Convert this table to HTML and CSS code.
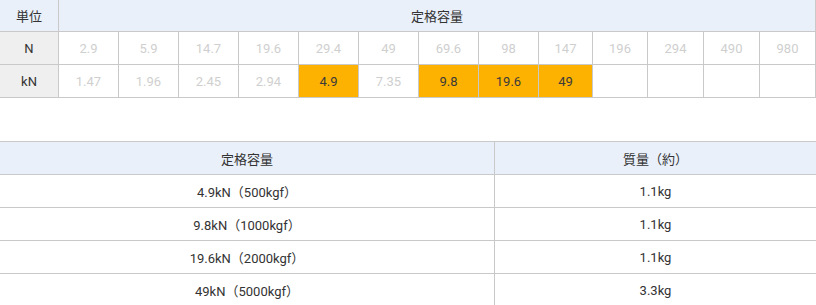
FILE: index.html
```html
<!DOCTYPE html>
<html lang="ja">
<head>
<meta charset="utf-8">
<link rel="stylesheet" href="styles.css">
</head>
<body>
<table class="spec">
  <colgroup>
    <col class="c-unit"><col class="c60"><col class="c60"><col class="c60"><col class="c60"><col class="c60"><col class="c60"><col class="c60"><col class="c60"><col class="c54"><col class="c55"><col class="c56"><col class="c56"><col class="c56">
  </colgroup>
  <tr class="head">
    <th class="unit">単位</th>
    <th colspan="13">定格容量</th>
  </tr>
  <tr>
    <td class="unit">N</td>
    <td class="dim">2.9</td><td class="dim">5.9</td><td class="dim">14.7</td><td class="dim">19.6</td><td class="dim">29.4</td><td class="dim">49</td><td class="dim">69.6</td><td class="dim">98</td><td class="dim">147</td><td class="dim">196</td><td class="dim">294</td><td class="dim">490</td><td class="dim">980</td>
  </tr>
  <tr>
    <td class="unit">kN</td>
    <td class="dim">1.47</td><td class="dim">1.96</td><td class="dim">2.45</td><td class="dim">2.94</td><td class="hl">4.9</td><td class="dim">7.35</td><td class="hl">9.8</td><td class="hl">19.6</td><td class="hl">49</td><td></td><td></td><td></td><td></td>
  </tr>
</table>

<table class="mass">
  <colgroup><col class="m1"><col class="m2"></colgroup>
  <tr class="head"><th>定格容量</th><th>質量（約）</th></tr>
  <tr><td>4.9kN（500kgf）</td><td>1.1kg</td></tr>
  <tr><td>9.8kN（1000kgf）</td><td>1.1kg</td></tr>
  <tr><td>19.6kN（2000kgf）</td><td>1.1kg</td></tr>
  <tr><td>49kN（5000kgf）</td><td>3.3kg</td></tr>
</table>
</body>
</html>
```
FILE: styles.css
```css
html, body {
  margin: 0;
  padding: 0;
  background: #fff;
}
body {
  font-family: Roboto, "Noto Sans CJK JP", sans-serif;
  font-size: 13px;
  color: #333;
}
table {
  border-collapse: collapse;
  table-layout: fixed;
  margin-left: -1px;
  width: 817px;
}
th, td {
  border: 1px solid #c9c9c9;
  padding: 0;
  height: 32px;
  text-align: center;
  vertical-align: middle;
  font-weight: normal;
}
.spec {
  margin-top: -2px;
}
.head th {
  background: #e9f0fa;
  color: #333;
}
.spec td.unit {
  background: #efefef;
  color: #333;
}
.spec th.unit {
  background: #e9f0fa;
}
.dim {
  color: #cfcfcf;
}
.hl {
  background: #fdb100;
  color: #3a3a3a;
}
.c-unit { width: 59px; }
.c60 { width: 60px; }
.c54 { width: 54px; }
.c55 { width: 55px; }
.c56 { width: 56px; }

.mass {
  margin-top: 43px;
}
.m1 { width: 495px; }
.m2 { width: 322px; }
```
